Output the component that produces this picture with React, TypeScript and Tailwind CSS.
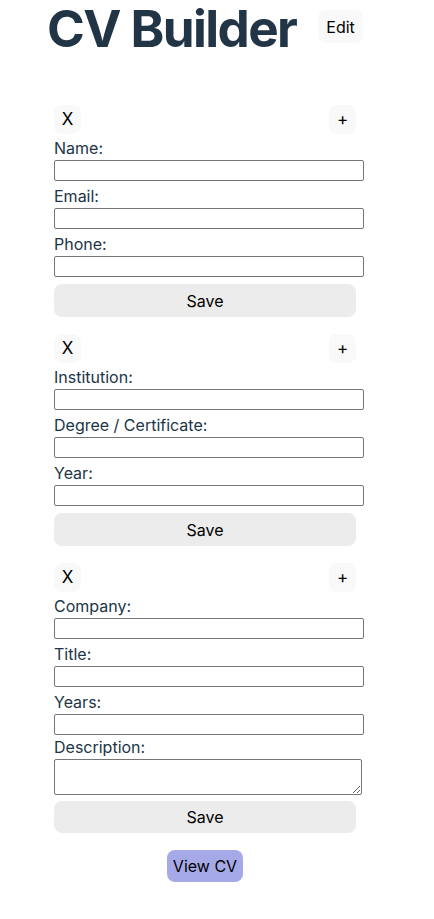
import React from "react";

const font = { fontFamily: "Inter, 'Noto Sans', sans-serif" };

function Field({ label, first, textarea, tight }: { label: string; first?: boolean; textarea?: boolean; tight?: boolean }) {
  return (
    <div className={`flex flex-col ${first ? "mt-[2px]" : tight ? "mt-0" : "mt-[3px]"}`}>
      <label className="block text-[16px] leading-[24px] text-[#213547]">{label}</label>
      {textarea ? (
        <textarea className="block w-[308px] h-[36px] border border-[#767676] rounded-[2px] bg-white p-[2px] text-[13px]" />
      ) : (
        <input className="block w-[310px] h-[21px] border border-[#767676] rounded-[2px] bg-white px-[2px] text-[13px]" />
      )}
    </div>
  );
}

function Section({ fields, className }: { fields: string[]; className?: string }) {
  const hasTextarea = fields.includes("Description:");
  return (
    <div className={`flex flex-col ${className ?? ""}`}>
      <div className="flex justify-between items-start">
        <button className="h-[29px] w-[27px] rounded-[8px] bg-[#f9f9f9] text-[17px] font-normal text-black flex items-center justify-center">
          X
        </button>
        <button className="h-[29px] w-[27px] rounded-[8px] bg-[#f9f9f9] text-[17px] font-normal text-black flex items-center justify-center">
          +
        </button>
      </div>
      {fields.map((f, i) => (
        <Field key={f} label={f} first={i === 0} textarea={f === "Description:"} tight={f === "Description:"} />
      ))}
      <button
        className={`${hasTextarea ? "mt-[6px] h-[32px]" : "mt-[7px] h-[33px]"} w-[302px] rounded-[8px] bg-[#ececec] text-[16px] font-normal text-black`}
      >
        Save
      </button>
    </div>
  );
}

export default function App() {
  return (
    <div className="bg-white min-h-[919px] w-[434px]" style={font}>
      <div className="flex items-start pl-[47px]">
        <h1 className="shrink-0 text-[51.2px] leading-[1.1] font-bold tracking-[-1.6px] text-[#213547] whitespace-nowrap">
          CV Builder
        </h1>
        <button className="shrink-0 ml-[22px] mt-[10px] h-[33px] px-[8px] rounded-[8px] bg-[#f9f9f9] text-[16px] font-normal text-black">
          Edit
        </button>
      </div>
      <div className="ml-[54px] w-[302px] flex flex-col">
        <Section className="mt-[49px]" fields={["Name:", "Email:", "Phone:"]} />
        <Section className="mt-[17px]" fields={["Institution:", "Degree / Certificate:", "Year:"]} />
        <Section className="mt-[17px]" fields={["Company:", "Title:", "Years:", "Description:"]} />
        <button className="self-center mt-[17px] h-[32px] w-[76px] rounded-[8px] bg-[#a6a9e8] text-[16px] font-normal text-black">
          View CV
        </button>
      </div>
    </div>
  );
}
